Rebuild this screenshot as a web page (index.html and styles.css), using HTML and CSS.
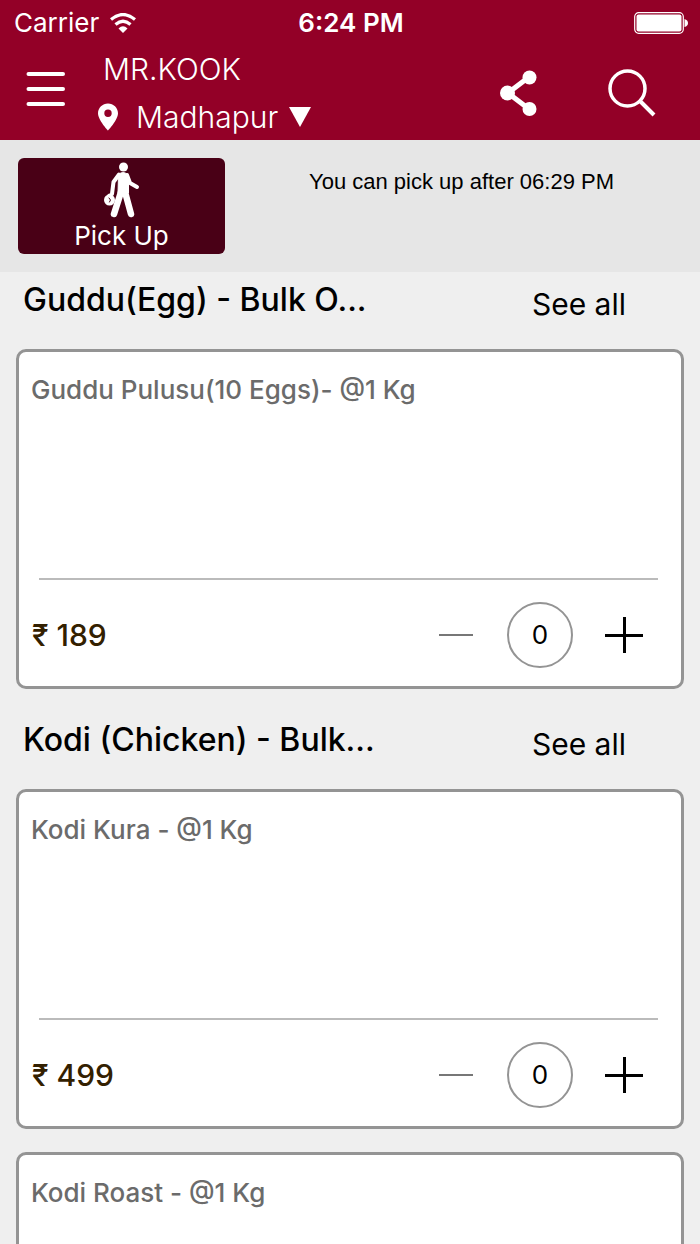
FILE: index.html
```html
<!doctype html>
<html lang="en">
    <head>
        <meta charset="UTF-8" />
        <meta name="viewport" content="width=device-width, initial-scale=1.0" />
        <title>MR.KOOK</title>
        <link rel="stylesheet" href="styles.css">
    </head>
    <body>
        <header class="header">
            <div class="status-bar">
                <div class="carrier">
                    <span>Carrier</span>
                    <svg width="26" height="20" viewBox="0 0 26 20" fill="none" stroke="#fff" stroke-width="3.200">
                        <path d="M1 6.500Q13 -3.500 25 6.500" />
                        <path d="M5.500 11.500Q13 5 20.500 11.500" />
                        <path d="M13 20L8.500 15.500Q13 11 17.500 15.500Z" fill="#fff" stroke="none" />
                    </svg>
                </div>
                <span class="time">6:24 PM</span>
                <svg class="battery" width="54" height="22" viewBox="0 0 54 22">
                    <rect x="0.700" y="0.700" width="48.600" height="20.600" rx="4" fill="none" stroke="#fff" stroke-width="1.200" />
                    <rect x="2.500" y="2.500" width="45" height="17" rx="2" fill="#fff" />
                    <path d="M50.500 7Q54 8 54 11T50.500 15Z" fill="#fff" />
                </svg>
            </div>
            <nav class="nav">
                <button class="icon-button menu-button" aria-label="Menu">
                    <svg width="40" height="36" viewBox="0 0 40 36" stroke="#fff" stroke-width="4" stroke-linecap="round">
                        <path d="M2.500 3H37M2.500 18H37M2.500 33H37" />
                    </svg>
                </button>
                <div class="place">
                    <div class="brand">MR.KOOK</div>
                    <div class="location">
                        <svg width="20" height="28" viewBox="0 0 20 28">
                            <path fill="#fff" fill-rule="evenodd" d="M10 0.500C4.500 0.500 0 4.800 0 10.200C0 17 10 27.500 10 27.500S20 17 20 10.200C20 4.800 15.500 0.500 10 0.500ZM10 6.500A3.700 3.700 0 1 1 10 13.900A3.700 3.700 0 1 1 10 6.500Z" />
                        </svg>
                        <select class="location-select" aria-label="Location">
                            <option>Madhapur</option>
                        </select>
                        <svg width="22" height="20" viewBox="0 0 22 20">
                            <path fill="#fff" d="M0 0H22L11 20Z" />
                        </svg>
                    </div>
                </div>
                <button class="icon-button share-button" aria-label="Share">
                    <svg width="38" height="46" viewBox="0 0 38 46" fill="#fff">
                        <path d="M29 7L8 23L29 39" fill="none" stroke="#fff" stroke-width="5" />
                        <circle cx="29.500" cy="7.500" r="7" />
                        <circle cx="7.500" cy="23" r="7.500" />
                        <circle cx="29.500" cy="39" r="7" />
                    </svg>
                </button>
                <button class="icon-button" aria-label="Search">
                    <svg width="48" height="48" viewBox="0 0 48 48" fill="none" stroke="#fff">
                        <circle cx="19.500" cy="19.500" r="17.500" stroke-width="3.500" />
                        <path d="M32 32L46 46" stroke-width="4" />
                    </svg>
                </button>
            </nav>
        </header>
        <div class="pickup-bar">
            <button class="pickup-button">
                <svg width="36" height="56" viewBox="0 0 36 56" fill="none" stroke="#fff" stroke-linecap="round" stroke-linejoin="round">
                    <circle cx="19.500" cy="5" r="4.500" fill="#fff" stroke="none" />
                    <path d="M15 12Q19 9 23 12L24.500 16V31H14L14.500 14Z" fill="#fff" stroke-width="1" />
                    <path d="M15 12.500L9.500 20L8 32" stroke-width="4" />
                    <path d="M23 13L26 21L33 25" stroke-width="4" />
                    <path d="M17 30L10 52M20.500 28L27 52" stroke-width="6.500" />
                    <circle cx="5.500" cy="38" r="5.500" fill="#fff" stroke="none" />
                    <path d="M3 35Q5 30 8 34" stroke-width="1.500" />
                    <path d="M5 36L6.500 38L5.500 40" stroke="#490016" stroke-width="1" />
                </svg>
                <span>Pick Up</span>
            </button>
            <p class="pickup-note">You can pick up after 06:29 PM</p>
        </div>
        <main class="menu-list">
            <section>
                <div class="section-head">
                    <h2>Guddu(Egg) - Bulk O...</h2>
                    <a href="#">See all</a>
                </div>
                <article class="card">
                    <h3>Guddu Pulusu(10 Eggs)- @1 Kg</h3>
                    <div class="card-footer">
                        <span class="price">₹ 189</span>
                        <button class="step minus" aria-label="Remove one"></button>
                        <output class="count">0</output>
                        <button class="step plus" aria-label="Add one"></button>
                    </div>
                </article>
            </section>
            <section>
                <div class="section-head">
                    <h2>Kodi (Chicken) - Bulk...</h2>
                    <a href="#">See all</a>
                </div>
                <article class="card">
                    <h3>Kodi Kura - @1 Kg</h3>
                    <div class="card-footer">
                        <span class="price">₹ 499</span>
                        <button class="step minus" aria-label="Remove one"></button>
                        <output class="count">0</output>
                        <button class="step plus" aria-label="Add one"></button>
                    </div>
                </article>
                <article class="card">
                    <h3>Kodi Roast - @1 Kg</h3>
                </article>
            </section>
        </main>
    </body>
</html>
```

FILE: styles.css
```css
* {
    box-sizing: border-box;
}
body {
    font-family: "Inter", sans-serif;
    background-color: #efefef;
    color: #000;
    margin: 0;
    height: 100vh;
    display: flex;
    flex-direction: column;
}
button {
    background: none;
    border: none;
    padding: 0;
    font-family: inherit;
    color: inherit;
    cursor: pointer;
}
svg {
    display: block;
    flex-shrink: 0;
}
h2,
h3,
p {
    margin: 0;
}
.header {
    background: #930027;
    color: #fff;
    flex-shrink: 0;
}
.status-bar {
    display: grid;
    grid-template-columns: 1fr auto 1fr;
    align-items: center;
    height: 46px;
    padding: 0 12px 0 14px;
    font-size: 26px;
    line-height: 32px;
}
.carrier {
    display: flex;
    align-items: center;
    gap: 11px;
}
.time {
    font-weight: 600;
}
.battery {
    justify-self: end;
}
.nav {
    display: flex;
    align-items: center;
    height: 94px;
    padding: 0 44px 0 26px;
}
.menu-button {
    margin: 0 32px 8px 0;
}
.share-button {
    margin-right: 70px;
}
.place {
    flex: 1;
}
.brand {
    font-size: 30px;
    font-weight: 300;
    line-height: 48px;
    padding-left: 5px;
}
.location {
    display: flex;
    align-items: center;
    gap: 10px;
    height: 48px;
}
.location-select {
    appearance: none;
    background: none;
    border: none;
    margin: 0;
    padding: 0 0 0 8px;
    color: #fff;
    font-family: inherit;
    font-size: 30px;
    font-weight: 300;
    line-height: 40px;
}
.pickup-bar {
    display: flex;
    align-items: flex-start;
    justify-content: space-between;
    height: 132px;
    padding: 18px 86px 18px 18px;
    background: #e6e6e6;
    flex-shrink: 0;
}
.pickup-button {
    display: flex;
    flex-direction: column;
    align-items: center;
    gap: 2px;
    width: 207px;
    height: 96px;
    padding-top: 4px;
    border-radius: 6px;
    background: #490016;
    color: #fff;
    font-size: 26px;
    line-height: 32px;
}
.pickup-note {
    font-family: "Liberation Sans", sans-serif;
    font-size: 22px;
    line-height: 48px;
}
.menu-list {
    flex: 1;
    min-height: 0;
    overflow-y: auto;
    scrollbar-width: none;
}
.section-head {
    display: flex;
    justify-content: space-between;
    height: 77px;
    padding: 8px 74px 0 23px;
}
.section-head h2 {
    font-size: 32px;
    font-weight: 500;
    line-height: 40px;
}
.section-head a {
    color: inherit;
    text-decoration: none;
    font-size: 30px;
    line-height: 48px;
}
.card {
    display: flex;
    flex-direction: column;
    justify-content: space-between;
    min-height: 340px;
    margin: 0 16px 23px;
    padding-top: 22px;
    background: #fff;
    border: 3px solid #949494;
    border-radius: 10px;
}
.card h3 {
    padding: 0 12px;
    color: #6b6b6b;
    font-size: 26px;
    font-weight: 500;
    line-height: 32px;
}
.card-footer {
    display: flex;
    align-items: center;
    height: 108px;
    margin: 0 23px 0 20px;
    padding: 4px 15px 0 0;
    border-top: 2px solid #bbb;
}
.price {
    flex: 1;
    margin-left: -7px;
    color: #332000;
    font-size: 30px;
    font-weight: 500;
}
.step {
    width: 38px;
    height: 38px;
    background-repeat: no-repeat;
    background-position: center;
}
.minus {
    background-image: linear-gradient(#777, #777);
    background-size: 34px 2px;
}
.plus {
    background-image: linear-gradient(#000, #000), linear-gradient(#000, #000);
    background-size: 38px 3px, 3px 36px;
}
.count {
    width: 66px;
    height: 66px;
    margin: 0 32px;
    border: 2px solid #949494;
    border-radius: 50%;
    font-size: 26px;
    line-height: 62px;
    text-align: center;
}
```
